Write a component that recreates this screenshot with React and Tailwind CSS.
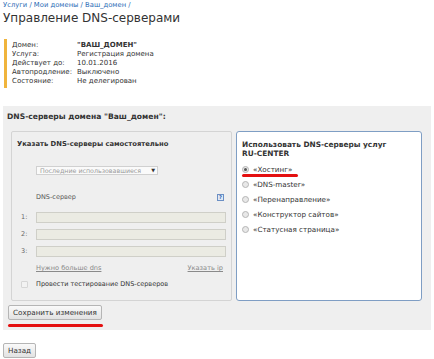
import { Fragment } from "react";

const services = ["«Хостинг»", "«DNS-master»", "«Перенаправление»", "«Конструктор сайтов»", "«Статусная страница»"];

const info = [
  ["Домен:", "\"ВАШ_ДОМЕН\"", true],
  ["Услуга:", "Регистрация домена"],
  ["Действует до:", "10.01.2016"],
  ["Автопродление:", "Выключено"],
  ["Состояние:", "Не делегирован"],
];

function Radio({ checked }) {
  return (
    <span className="w-[7px] h-[7px] rounded-full border border-[#b5b5b5] bg-[#e8e8e8] flex items-center justify-center shrink-0">
      {checked && <span className="w-[3px] h-[3px] rounded-full bg-[#555]" />}
    </span>
  );
}

function Btn({ children }) {
  return (
    <button className="h-[15px] px-[4px] border border-[#b5b5b5] rounded-[2px] bg-gradient-to-b from-[#fafafa] to-[#e2e2e2] text-[7.2px] leading-[9px] text-[#333]">
      {children}
    </button>
  );
}

export default function App() {
  return (
    <div className="w-[434px] h-[359px] overflow-hidden bg-white text-[#333] font-['DejaVu_Sans',Verdana,sans-serif]">
      {/* header */}
      <div className="pl-[3px] pt-[1px] text-[6.8px] leading-[9px] text-[#2b6bb5]">
        <span>Услуги</span> / <span>Мои домены</span> / <span>Ваш_домен</span> /
      </div>
      <h1 className="pl-[3px] text-[12px] leading-[16px] text-[#333]">Управление DNS-серверами</h1>

      {/* domain info */}
      <div className="mt-[13px] ml-[4px] border-l-[3px] border-[#f0b43c] pl-[5px] py-[2px] text-[7px] leading-[9px]">
        <div className="grid grid-cols-[65px_auto]">
          {info.map(([k, v, b]) => (
            <Fragment key={k}>
              <span>{k}</span>
              <span className={b ? "font-bold" : ""}>{v}</span>
            </Fragment>
          ))}
        </div>
      </div>

      {/* dns panel */}
      <div className="mt-[18px] mx-[3px] bg-[#efefef] pt-[6px] pb-[3px]">
        <div className="pl-[4px] text-[7.6px] leading-[9px] font-bold">DNS-серверы домена "Ваш_домен":</div>

        <div className="mt-[10px] ml-[8px] mr-[8px] flex gap-[4px] h-[170px]">
          {/* left box */}
          <div className="w-[221px] border border-[#d4d4d4] rounded-[2px] bg-[#efefef] px-[5px] pt-[8px] text-[6.5px] leading-[9px]">
            <div className="font-bold text-[6.8px]">Указать DNS-серверы самостоятельно</div>
            <div className="mt-[17px] ml-[19px] w-[122px] h-[9px] border border-[#d0d0d0] bg-[#fafafa] flex items-center justify-between pl-[3px] pr-[2px] text-[6.3px] text-[#999] whitespace-nowrap">
              <span>Последние использовавшиеся</span>
              <span className="text-[#333] text-[5px]">▼</span>
            </div>
            <div className="mt-[18px] ml-[19px] flex justify-between items-center pr-[2px]">
              <span className="text-[#555]">DNS-сервер</span>
              <span className="w-[7px] h-[7px] border border-[#6b8fc4] bg-[#dfe8f5] text-[5px] leading-[5px] text-[#2b5fa8] flex items-center justify-center font-bold">?</span>
            </div>
            <div className="mt-[10px] flex flex-col gap-[6px]">
              {[1, 2, 3].map((n) => (
                <div key={n} className="flex items-center">
                  <span className="w-[19px] pl-[4px] text-[#666]">{n}:</span>
                  <div className="w-[190px] h-[11px] border border-[#cfcfc8] bg-[#ebebe3]" />
                </div>
              ))}
            </div>
            <div className="mt-[7px] ml-[19px] mr-[3px] flex justify-between text-[#8a8a8a] underline text-[6.6px]">
              <span>Нужно больше dns</span>
              <span>Указать ip</span>
            </div>
            <div className="mt-[7px] flex items-center">
              <span className="ml-[4px] w-[7px] h-[7px] border border-[#d6d6d6] bg-[#f2f2f2] rounded-[1px]" />
              <span className="ml-[8px]">Провести тестирование DNS-серверов</span>
            </div>
          </div>

          {/* right box */}
          <div className="w-[186px] border border-[#7f9ec4] rounded-[3px] bg-white px-[5px] pt-[8px] text-[7.2px] leading-[9px]">
            <div className="font-bold text-[7.4px]">Использовать DNS-серверы услуг<br />RU-CENTER</div>
            <div className="mt-[4px] flex flex-col">
              {services.map((s, i) => (
                <div key={s} className="flex flex-col">
                  <div className="flex items-center gap-[4px] h-[15px]">
                    <Radio checked={i === 0} />
                    <span>{s}</span>
                  </div>
                  {i === 0 && <div className="-mt-[3px] w-[56px] h-[3px] rounded-full bg-[#e41010]" />}
                </div>
              ))}
            </div>
          </div>
        </div>

        <div className="mt-[4px] ml-[5px] flex flex-col items-start">
          <Btn>Сохранить изменения</Btn>
          <div className="mt-[4px] w-[95px] h-[3px] rounded-full bg-[#e41010]" />
        </div>
      </div>

      <div className="mt-[13px] ml-[3px] flex">
        <Btn>Назад</Btn>
      </div>
    </div>
  );
}
